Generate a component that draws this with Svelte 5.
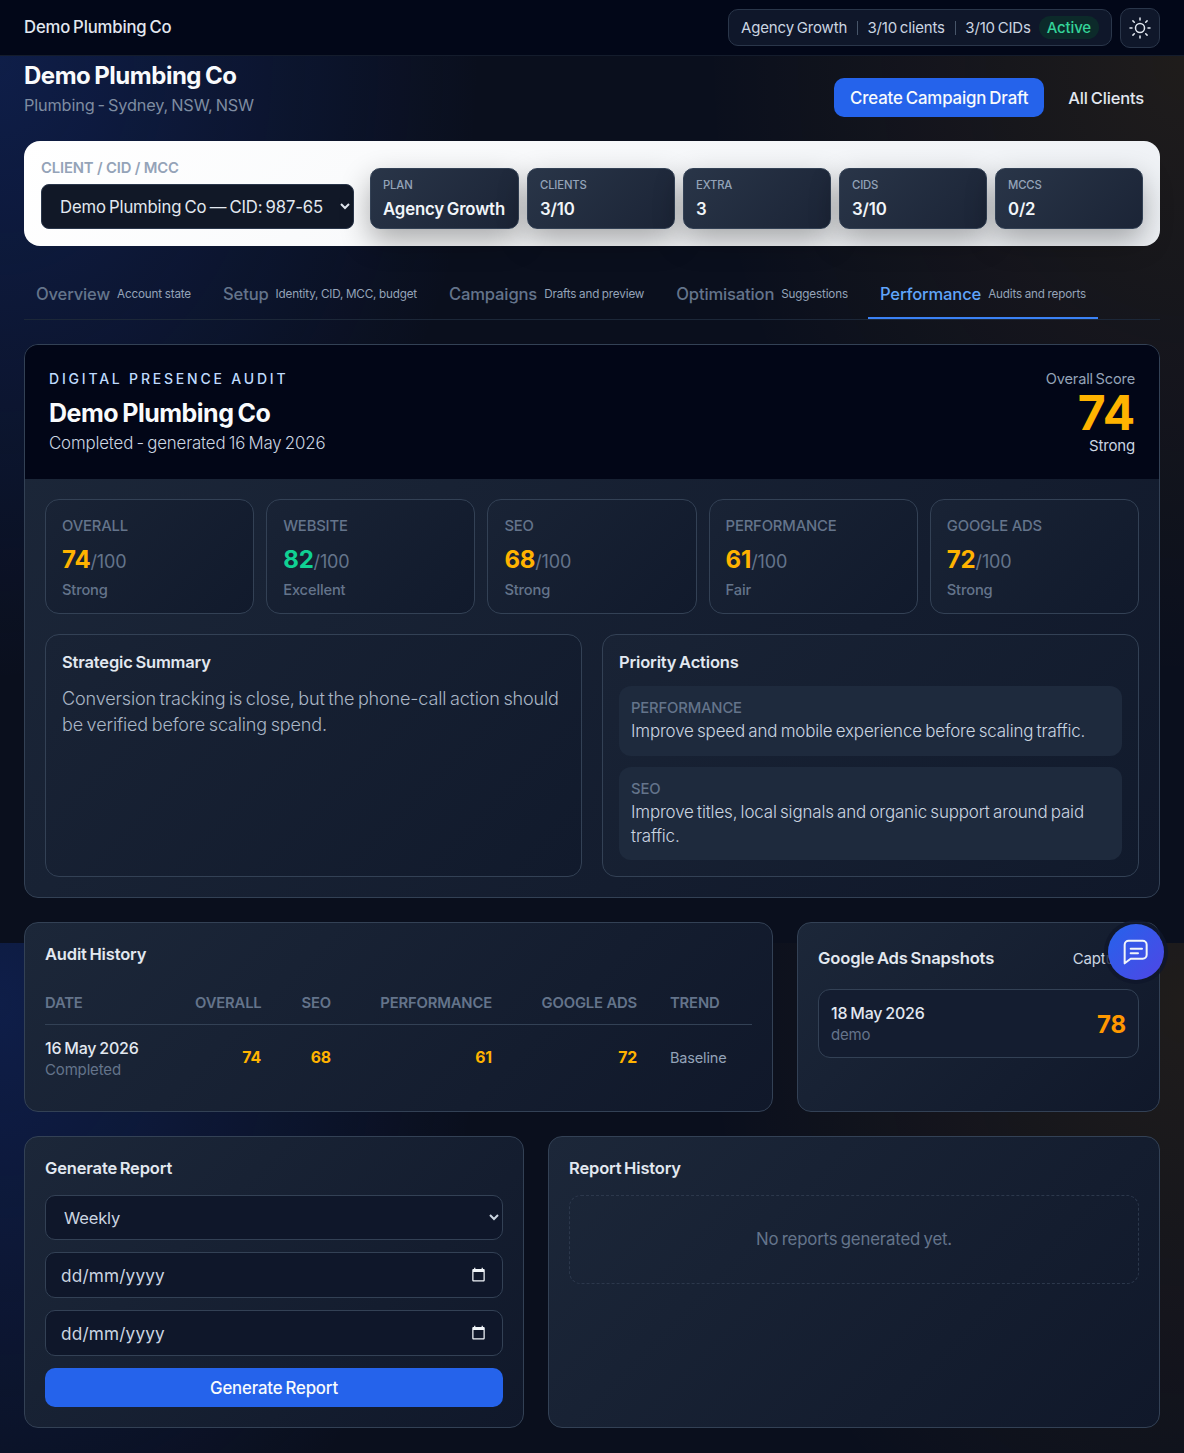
<script lang="ts">
  const tabs = [
    { label: 'Overview', hint: 'Account state' },
    { label: 'Setup', hint: 'Identity, CID, MCC, budget' },
    { label: 'Campaigns', hint: 'Drafts and preview' },
    { label: 'Optimisation', hint: 'Suggestions' },
    { label: 'Performance', hint: 'Audits and reports' },
  ]
  const activeTab = 'Performance'

  const stats = [
    { label: 'Plan', value: 'Agency Growth' },
    { label: 'Clients', value: '3/10' },
    { label: 'Extra', value: '3' },
    { label: 'CIDs', value: '3/10' },
    { label: 'MCCs', value: '0/2' },
  ]

  const scores = [
    { label: 'Overall', score: 74, note: 'Strong' },
    { label: 'Website', score: 82, note: 'Excellent' },
    { label: 'SEO', score: 68, note: 'Strong' },
    { label: 'Performance', score: 61, note: 'Fair' },
    { label: 'Google Ads', score: 72, note: 'Strong' },
  ]
</script>

<div class="page">
  <nav class="topbar">
    <span class="brand">Demo Plumbing Co</span>
    <div class="topbar-right">
      <div class="plan-pill">
        <span>Agency Growth</span>
        <i class="sep"></i>
        <span>3/10 clients</span>
        <i class="sep"></i>
        <span>3/10 CIDs</span>
        <b class="active-badge">Active</b>
      </div>
      <button type="button" class="theme-btn" aria-label="Toggle theme">
        <svg width="24" height="24" viewBox="0 0 24 24" fill="none" stroke="currentColor" stroke-width="1.5" stroke-linecap="round">
          <circle cx="12" cy="12" r="4.5" />
          <path d="M12 2v2M12 20v2M2 12h2M20 12h2M4.9 4.9l1.4 1.4M17.7 17.7l1.4 1.4M4.9 19.1l1.4-1.4M17.7 6.3l1.4-1.4" />
        </svg>
      </button>
    </div>
  </nav>

  <main class="content">
    <header class="client-head">
      <div class="client-title">
        <h1>Demo Plumbing Co</h1>
        <p>Plumbing - Sydney, NSW, NSW</p>
      </div>
      <div class="head-actions">
        <button type="button" class="btn-primary">Create Campaign Draft</button>
        <button type="button" class="btn-ghost">All Clients</button>
      </div>
    </header>

    <section class="client-card">
      <div class="client-picker">
        <label for="client">CLIENT / CID / MCC</label>
        <select id="client">
          <option>Demo Plumbing Co — CID: 987-654-3210</option>
        </select>
      </div>
      <div class="stat-row">
        {#each stats as stat}
          <div class="stat">
            <span class="stat-label">{stat.label}</span>
            <strong>{stat.value}</strong>
          </div>
        {/each}
      </div>
    </section>

    <div class="tabs">
      {#each tabs as tab}
        <button type="button" class="tab" class:active={activeTab === tab.label}>
          <span class="tab-label">{tab.label}</span>
          <span class="tab-hint">{tab.hint}</span>
        </button>
      {/each}
    </div>

    <section class="audit">
      <div class="audit-hero">
        <div>
          <div class="eyebrow">DIGITAL PRESENCE AUDIT</div>
          <h2>Demo Plumbing Co</h2>
          <p>Completed - generated 16 May 2026</p>
        </div>
        <div class="overall">
          <span class="overall-label">Overall Score</span>
          <span class="overall-num">74</span>
          <span class="overall-note">Strong</span>
        </div>
      </div>

      <div class="audit-body">
        <div class="score-grid">
          {#each scores as s}
            <div class="score-card">
              <div class="score-label">{s.label}</div>
              <div class="score-val">
                <span class="num" class:good={s.score >= 80}>{s.score}</span><span class="of">/100</span>
              </div>
              <div class="score-note">{s.note}</div>
            </div>
          {/each}
        </div>

        <div class="summary-grid">
          <div class="summary-card">
            <h3>Strategic Summary</h3>
            <p class="summary-text">Conversion tracking is close, but the phone-call action should be verified before scaling spend.</p>
          </div>
          <div class="summary-card">
            <h3>Priority Actions</h3>
            <div class="actions">
              <div class="action">
                <span>Performance</span>
                <p>Improve speed and mobile experience before scaling traffic.</p>
              </div>
              <div class="action">
                <span>SEO</span>
                <p>Improve titles, local signals and organic support around paid traffic.</p>
              </div>
            </div>
          </div>
        </div>
      </div>
    </section>

    <div class="history-row">
      <section class="panel">
        <h3>Audit History</h3>
        <table>
          <colgroup>
            <col style="width:150px" />
            <col style="width:66px" />
            <col style="width:70px" />
            <col style="width:161px" />
            <col style="width:145px" />
            <col />
          </colgroup>
          <thead>
            <tr>
              <th>Date</th>
              <th class="r">Overall</th>
              <th class="r">SEO</th>
              <th class="r">Performance</th>
              <th class="r">Google Ads</th>
              <th class="trend">Trend</th>
            </tr>
          </thead>
          <tbody>
            <tr>
              <td>
                <div class="row-date">16 May 2026</div>
                <div class="row-sub">Completed</div>
              </td>
              <td class="r val">74</td>
              <td class="r val">68</td>
              <td class="r val">61</td>
              <td class="r val">72</td>
              <td class="trend baseline">Baseline</td>
            </tr>
          </tbody>
        </table>
      </section>

      <section class="panel snapshots">
        <div class="snap-head">
          <h3>Google Ads Snapshots</h3>
          <button type="button" class="capture">Capture</button>
        </div>
        <div class="snap">
          <div>
            <div class="snap-date">18 May 2026</div>
            <div class="snap-sub">demo</div>
          </div>
          <strong>78</strong>
        </div>
      </section>
    </div>

    <div class="report-row">
      <section class="panel">
        <h3>Generate Report</h3>
        <form class="report-form" on:submit|preventDefault>
          <select class="field field-select">
            <option>Weekly</option>
            <option>Monthly</option>
          </select>
          {#each ['from', 'to'] as name}
            <div class="date-field">
              <input class="field" type="text" {name} placeholder="dd/mm/yyyy" />
              <svg width="15" height="15" viewBox="0 0 24 24" fill="currentColor">
                <path d="M20 3h-1V1h-2v2H7V1H5v2H4c-1.1 0-2 .9-2 2v16c0 1.1.9 2 2 2h16c1.1 0 2-.9 2-2V5c0-1.1-.9-2-2-2zm0 18H4V8h16v13z" />
              </svg>
            </div>
          {/each}
          <button type="submit" class="btn-generate">Generate Report</button>
        </form>
      </section>
      <section class="panel">
        <h3>Report History</h3>
        <div class="empty">No reports generated yet.</div>
      </section>
    </div>
  </main>

  <button type="button" class="chat-fab" aria-label="Open chat">
    <svg width="32" height="32" viewBox="0 0 24 24" fill="none" stroke="currentColor" stroke-width="1.5" stroke-linecap="round" stroke-linejoin="round">
      <path d="M3.5 20.5V6.5a3 3 0 0 1 3-3h10.5a3 3 0 0 1 3 3v7.5a3 3 0 0 1-3 3H8z" />
      <path d="M8 9.5h8.5M8 13h5.5" />
    </svg>
  </button>
</div>

<style>
  :global(body) {
    background-color: #0a0f1d;
    background-image:
      radial-gradient(ellipse 480px 620px at 0 60px, rgba(29, 78, 216, 0.23), transparent 100%),
      radial-gradient(ellipse 480px 620px at 100% 60px, rgba(245, 158, 11, 0.09), transparent 100%);
    background-size: 100% 943px;
    background-repeat: repeat-y;
    color: #e2e8f0;
  }

  .page {
    position: relative;
    font-family: Inter, 'Liberation Sans', sans-serif;
    letter-spacing: -0.01em;
    word-spacing: -0.08em;
  }

  button,
  select,
  input {
    font-family: inherit;
    letter-spacing: inherit;
    word-spacing: inherit;
  }

  h1,
  h2,
  h3,
  p {
    margin: 0;
  }

  .topbar {
    box-sizing: border-box;
    height: 56px;
    padding: 0 24px;
    display: flex;
    align-items: center;
    justify-content: space-between;
    background: #020718;
    border-bottom: 1px solid #141c2c;
  }

  .brand {
    padding-bottom: 2px;
    font-size: 16.7px;
    font-weight: 500;
    color: #e2e8f0;
  }

  .topbar-right {
    display: flex;
    align-items: center;
    gap: 8px;
  }

  .plan-pill {
    box-sizing: border-box;
    width: 384px;
    height: 37px;
    padding: 0 12px;
    display: flex;
    align-items: center;
    gap: 10px;
    border: 1px solid #2a364a;
    border-radius: 10px;
    background: #0f172a;
    font-size: 15px;
    color: #cbd5e1;
    white-space: nowrap;
  }

  .sep {
    width: 1px;
    height: 14px;
    background: #475569;
  }

  .active-badge {
    margin-left: -2px;
    padding: 2px 8px;
    border-radius: 999px;
    background: #0c2a2a;
    color: #34d399;
    font-weight: 500;
  }

  .theme-btn {
    width: 40px;
    height: 40px;
    padding: 0;
    display: flex;
    align-items: center;
    justify-content: center;
    border: 1px solid #2a364a;
    border-radius: 10px;
    background: #0f172a;
    color: #e2e8f0;
  }

  .content {
    padding: 0 24px 25px;
  }

  .client-head {
    height: 85px;
    display: flex;
    justify-content: space-between;
    align-items: center;
  }

  .client-title {
    align-self: flex-start;
    padding-top: 5px;
  }

  h1 {
    font-size: 24px;
    line-height: 30px;
    font-weight: 700;
    letter-spacing: -0.02em;
    color: #f8fafc;
  }

  .client-title p {
    margin-top: 2px;
    font-size: 16.3px;
    line-height: 24px;
    color: #7e8ca1;
  }

  .head-actions {
    display: flex;
    gap: 8px;
    margin-bottom: 2px;
  }

  .btn-primary {
    height: 39px;
    padding: 0 16px;
    border: 0;
    border-radius: 10px;
    background: #2563eb;
    color: #f8fafc;
    font-size: 16.85px;
    font-weight: 500;
  }

  .btn-ghost {
    height: 39px;
    padding: 0 16px;
    border: 0;
    background: transparent;
    color: #e2e8f0;
    font-size: 16.5px;
    font-weight: 500;
  }

  .client-card {
    box-sizing: border-box;
    height: 105px;
    padding: 17px;
    display: flex;
    align-items: flex-end;
    gap: 16px;
    border-radius: 16px;
    background: linear-gradient(135deg, #ffffff, #eef1f5);
  }

  .client-picker {
    width: 313px;
    flex-shrink: 0;
  }

  .client-picker label {
    display: block;
    margin-bottom: 6px;
    font-size: 14.8px;
    line-height: 20px;
    font-weight: 600;
    word-spacing: 0;
    color: #94a3b8;
  }

  .client-picker select {
    box-sizing: border-box;
    width: 100%;
    height: 45px;
    padding: 0 14px;
    border: 1px solid #2a364a;
    border-radius: 8px;
    background: #111827;
    color: #e2e8f0;
    font-size: 16.7px;
    color-scheme: dark;
  }

  .stat-row {
    flex: 1;
    display: grid;
    grid-template-columns: 149px repeat(4, 1fr);
    gap: 8px;
  }

  .stat {
    box-sizing: border-box;
    height: 61px;
    padding: 9px 12px;
    border: 1px solid #334155;
    border-radius: 10px;
    background: linear-gradient(135deg, #293548, #1b2436);
    box-shadow: 0 12px 30px rgba(0, 0, 0, 0.32);
  }

  .stat-label {
    display: block;
    font-size: 11.3px;
    line-height: 14px;
    font-weight: 500;
    text-transform: uppercase;
    color: #94a3b8;
  }

  .stat strong {
    display: block;
    margin-top: 5px;
    font-size: 16.8px;
    line-height: 24px;
    font-weight: 600;
    color: #f1f5f9;
    white-space: nowrap;
  }

  .tabs {
    box-sizing: border-box;
    margin-top: 24px;
    height: 50px;
    display: flex;
    gap: 8px;
    border-bottom: 1px solid #1c2738;
  }

  .tab {
    height: 49px;
    padding: 0 12px;
    display: flex;
    align-items: center;
    gap: 7px;
    border: 0;
    border-bottom: 2px solid transparent;
    background: transparent;
    color: #64748b;
    white-space: nowrap;
  }

  .tab-label {
    font-size: 16.6px;
    font-weight: 500;
  }

  .tab-hint {
    font-size: 11.7px;
    word-spacing: -0.04em;
    color: #94a3b8;
  }

  .tab.active {
    border-bottom-color: #3b82f6;
  }

  .tab.active .tab-label {
    color: #60a5fa;
  }

  .audit {
    margin-top: 24px;
    border: 1px solid #334155;
    border-radius: 14px;
    overflow: hidden;
    background: linear-gradient(135deg, #1c2739, #10182a);
  }

  .audit-hero {
    box-sizing: border-box;
    height: 134px;
    padding: 24px;
    display: flex;
    justify-content: space-between;
    background: #020617;
  }

  .eyebrow {
    margin-top: 1px;
    font-size: 14px;
    line-height: 18px;
    font-weight: 500;
    letter-spacing: 0.2em;
    word-spacing: 0;
    color: #bfdbfe;
  }

  h2 {
    margin-top: 9px;
    font-size: 25px;
    line-height: 32px;
    font-weight: 700;
    letter-spacing: -0.02em;
    color: #f8fafc;
  }

  .audit-hero p {
    margin-top: 2px;
    font-size: 16.85px;
    line-height: 24px;
    font-weight: 350;
    color: #cbd5e1;
  }

  .overall {
    display: flex;
    flex-direction: column;
    align-items: flex-end;
  }

  .overall-label {
    font-size: 14.6px;
    line-height: 20px;
    color: #94a3b8;
  }

  .overall-num {
    font-size: 48px;
    line-height: 48px;
    font-weight: 700;
    color: #ffb300;
  }

  .overall-note {
    font-size: 15px;
    line-height: 18px;
    color: #cbd5e1;
  }

  .audit-body {
    padding: 20px;
  }

  .score-grid {
    display: grid;
    grid-template-columns: repeat(5, 1fr);
    gap: 12px;
  }

  .score-card {
    box-sizing: border-box;
    height: 115px;
    padding: 16px;
    border: 1px solid #334155;
    border-radius: 14px;
    background: linear-gradient(135deg, #192335, #111a2c);
  }

  .score-label {
    font-size: 14.8px;
    line-height: 20px;
    font-weight: 500;
    word-spacing: 0;
    text-transform: uppercase;
    color: #64748b;
  }

  .score-val {
    margin-top: 8px;
    line-height: 32px;
  }

  .num {
    font-size: 24px;
    font-weight: 700;
    color: #ffb300;
  }

  .num.good {
    color: #10d193;
  }

  .of {
    font-size: 18px;
    color: #64748b;
  }

  .score-note {
    margin-top: 2px;
    font-size: 14.7px;
    line-height: 20px;
    font-weight: 500;
    color: #64748b;
  }

  .summary-grid {
    margin-top: 20px;
    display: grid;
    grid-template-columns: 1fr 1fr;
    gap: 20px;
  }

  .summary-card {
    box-sizing: border-box;
    height: 243px;
    padding: 15px 16px 16px;
    border: 1px solid #334155;
    border-radius: 14px;
    background: linear-gradient(135deg, #192335, #111a2c);
  }

  h3 {
    font-size: 16.5px;
    line-height: 24px;
    font-weight: 600;
    color: #e2e8f0;
  }

  .summary-text {
    margin-top: 12px;
    font-size: 18.05px;
    line-height: 26px;
    font-weight: 350;
    color: #aab6c6;
  }

  .actions {
    margin-top: 12px;
    display: flex;
    flex-direction: column;
    gap: 11.5px;
  }

  .action {
    padding: 12px;
    border-radius: 12px;
    background: #1e2a3d;
  }

  .action span {
    display: block;
    margin-bottom: 2px;
    font-size: 14.8px;
    line-height: 20px;
    font-weight: 500;
    text-transform: uppercase;
    color: #64748b;
  }

  .action p {
    font-size: 16.95px;
    line-height: 23.5px;
    font-weight: 350;
    color: #cbd5e1;
  }

  .history-row {
    margin-top: 24px;
    display: grid;
    grid-template-columns: 749px 1fr;
    gap: 24px;
  }

  .report-row {
    margin-top: 24px;
    display: grid;
    grid-template-columns: 500px 1fr;
    gap: 24px;
  }

  .panel {
    box-sizing: border-box;
    padding: 19px 20px 20px;
    border: 1px solid #334155;
    border-radius: 14px;
    background: linear-gradient(135deg, #1c2739, #10182a);
  }

  table {
    width: 100%;
    margin-top: 16px;
    table-layout: fixed;
    border-collapse: collapse;
  }

  th {
    height: 42px;
    padding: 0;
    font-size: 14.8px;
    font-weight: 600;
    word-spacing: 0;
    text-align: left;
    text-transform: uppercase;
    color: #64748b;
    border-bottom: 1px solid #334155;
  }

  th.r {
    text-align: right;
  }

  td {
    padding: 12px 0 11px;
    vertical-align: middle;
    font-size: 15.8px;
  }

  .r {
    text-align: right;
  }

  td.r {
    padding-bottom: 13px;
  }

  .trend {
    padding-left: 33px;
    white-space: nowrap;
  }

  .row-date {
    font-size: 16px;
    line-height: 23px;
    font-weight: 500;
    color: #e2e8f0;
  }

  .row-sub {
    font-size: 15px;
    line-height: 20px;
    color: #64748b;
  }

  .val {
    font-weight: 700;
    color: #ffb300;
  }

  .baseline {
    padding-bottom: 13px;
    font-size: 14.5px;
    color: #94a3b8;
  }

  .snap-head {
    display: flex;
    align-items: center;
    justify-content: space-between;
    margin-top: 4px;
  }

  .snap-head h3 {
    font-size: 16.6px;
  }

  .capture {
    padding: 0 11px 0 0;
    border: 0;
    background: transparent;
    color: #cbd5e1;
    font-size: 15px;
  }

  .snap {
    margin-top: 19px;
    padding: 12px;
    display: flex;
    align-items: center;
    justify-content: space-between;
    border: 1px solid #334155;
    border-radius: 12px;
    background: #141d30;
  }

  .snap-date {
    font-size: 16px;
    line-height: 23px;
    font-weight: 500;
    color: #e2e8f0;
  }

  .snap-sub {
    font-size: 15px;
    line-height: 20px;
    color: #64748b;
  }

  .snap strong {
    padding-top: 2px;
    font-size: 24px;
    font-weight: 700;
    color: #ff9800;
  }

  .report-form {
    margin-top: 15px;
    display: flex;
    flex-direction: column;
    gap: 12px;
  }

  .field {
    box-sizing: border-box;
    display: block;
    width: 100%;
    height: 46px;
    padding: 0 15px;
    border: 1px solid #334155;
    border-radius: 10px;
    background: #0f172a;
    color: #cbd5e1;
    font-size: 17.2px;
    letter-spacing: 0.01em;
    color-scheme: dark;
  }

  .field::placeholder {
    color: #cbd5e1;
    opacity: 1;
  }

  .field-select {
    height: 45px;
    padding: 0 14px;
    font-size: 16.5px;
    letter-spacing: -0.01em;
  }

  .date-field {
    position: relative;
  }

  .date-field svg {
    position: absolute;
    top: 15px;
    right: 17px;
    color: #f1f5f9;
    pointer-events: none;
  }

  .btn-generate {
    height: 39px;
    border: 0;
    border-radius: 10px;
    background: #2563eb;
    color: #f8fafc;
    font-size: 16.8px;
    font-weight: 500;
  }

  .empty {
    box-sizing: border-box;
    height: 89px;
    margin-top: 15px;
    padding-bottom: 2px;
    display: flex;
    align-items: center;
    justify-content: center;
    border: 1px dashed #2c384c;
    border-radius: 12px;
    font-size: 16.8px;
    color: #64748b;
  }

  .chat-fab {
    position: absolute;
    top: 924px;
    right: 20px;
    width: 56px;
    height: 56px;
    padding: 0;
    display: flex;
    align-items: center;
    justify-content: center;
    border: 0;
    border-radius: 50%;
    background: linear-gradient(135deg, #2563eb, #4f46e5);
    box-shadow: 0 0 0 4px rgba(15, 23, 42, 0.8);
    color: #f1f5f9;
  }
</style>
